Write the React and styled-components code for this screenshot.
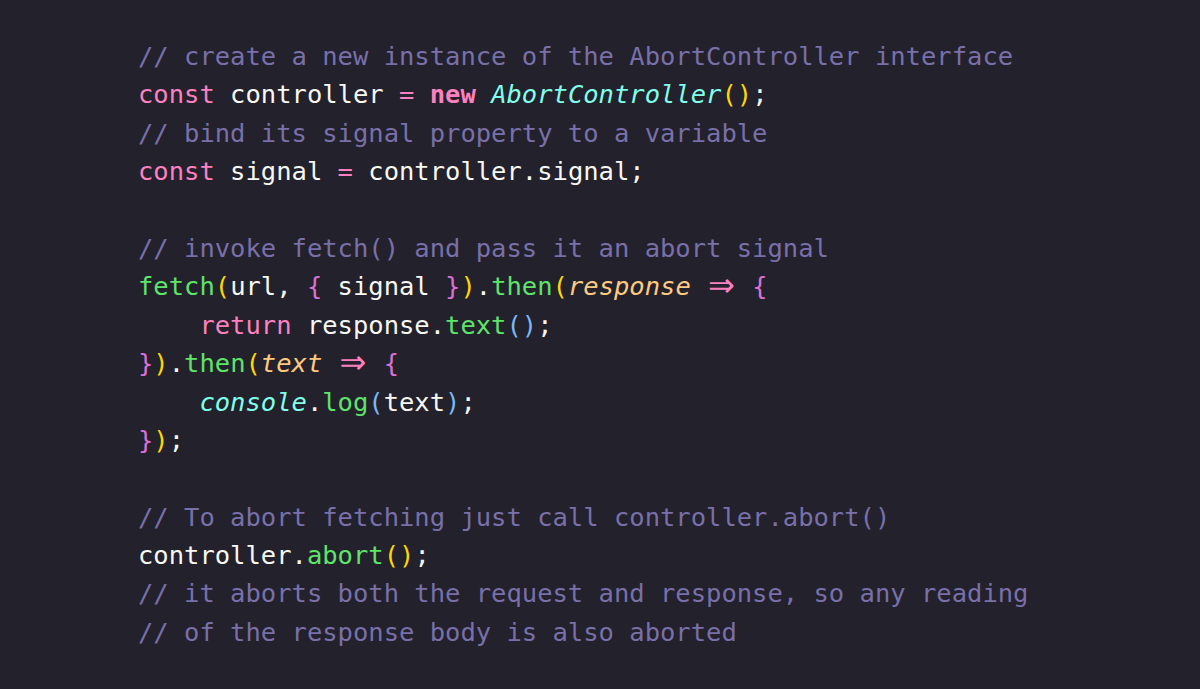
import styled, { createGlobalStyle } from 'styled-components'

const GlobalStyle = createGlobalStyle`
  html, body {
    margin: 0;
    padding: 0;
    background: #22212c;
  }
`

const Page = styled.div`
  width: 1200px;
  height: 689px;
  background: #22212c;
  box-sizing: border-box;
  padding: 37px 0 0 138px;
  font-family: "DejaVu Sans Mono", "Liberation Mono", monospace;
  font-size: 25.5px;
  line-height: 38.4px;
  color: #f8f8f2;
  overflow: hidden;
`

const Line = styled.div`
  white-space: pre;
  height: 38.4px;
  padding-left: ${(p) => (p.$indent ? '4ch' : '0')};
`

const Comment = styled.span`
  color: #7970a9;
`
const Keyword = styled.span`
  color: #ff80bf;
  font-weight: ${(p) => (p.$bold ? 700 : 400)};
`
const Fn = styled.span`
  color: #5fe46a;
`
const Klass = styled.span`
  color: #80ffea;
  font-style: italic;
`
const Param = styled.span`
  color: #ffca80;
  font-style: italic;
`
const Bracket = styled.span`
  color: ${(p) => ({ 1: '#ffd700', 2: '#da70d6', 3: '#7ab8f5' }[p.$level])};
`
const Arrow = styled.span`
  display: inline-block;
  width: 30.7px;
  height: 38.4px;
  vertical-align: top;
  text-align: center;
  font-family: "DejaVu Sans", sans-serif;
  font-size: 32px;
  line-height: 36px;
  color: #ff80bf;
`

const App = () => {
  return (
    <Page>
      <GlobalStyle />
      <Line><Comment>// create a new instance of the AbortController interface</Comment></Line>
      <Line>
        <Keyword>const</Keyword> controller <Keyword>=</Keyword> <Keyword $bold>new</Keyword>{' '}
        <Klass>AbortController</Klass><Bracket $level={1}>()</Bracket>;
      </Line>
      <Line><Comment>// bind its signal property to a variable</Comment></Line>
      <Line>
        <Keyword>const</Keyword> signal <Keyword>=</Keyword> controller.signal;
      </Line>
      <Line />
      <Line><Comment>// invoke fetch() and pass it an abort signal</Comment></Line>
      <Line>
        <Fn>fetch</Fn><Bracket $level={1}>(</Bracket>url, <Bracket $level={2}>{'{'}</Bracket> signal{' '}
        <Bracket $level={2}>{'}'}</Bracket><Bracket $level={1}>)</Bracket>.<Fn>then</Fn>
        <Bracket $level={1}>(</Bracket><Param>response</Param> <Arrow>⇒</Arrow>{' '}
        <Bracket $level={2}>{'{'}</Bracket>
      </Line>
      <Line $indent>
        <Keyword>return</Keyword> response.<Fn>text</Fn><Bracket $level={3}>()</Bracket>;
      </Line>
      <Line>
        <Bracket $level={2}>{'}'}</Bracket><Bracket $level={1}>)</Bracket>.<Fn>then</Fn>
        <Bracket $level={1}>(</Bracket><Param>text</Param> <Arrow>⇒</Arrow>{' '}
        <Bracket $level={2}>{'{'}</Bracket>
      </Line>
      <Line $indent>
        <Klass>console</Klass>.<Fn>log</Fn><Bracket $level={3}>(</Bracket>text
        <Bracket $level={3}>)</Bracket>;
      </Line>
      <Line>
        <Bracket $level={2}>{'}'}</Bracket><Bracket $level={1}>)</Bracket>;
      </Line>
      <Line />
      <Line><Comment>// To abort fetching just call controller.abort()</Comment></Line>
      <Line>
        controller.<Fn>abort</Fn><Bracket $level={1}>()</Bracket>;
      </Line>
      <Line><Comment>// it aborts both the request and response, so any reading</Comment></Line>
      <Line><Comment>// of the response body is also aborted</Comment></Line>
    </Page>
  )
}

export default App
